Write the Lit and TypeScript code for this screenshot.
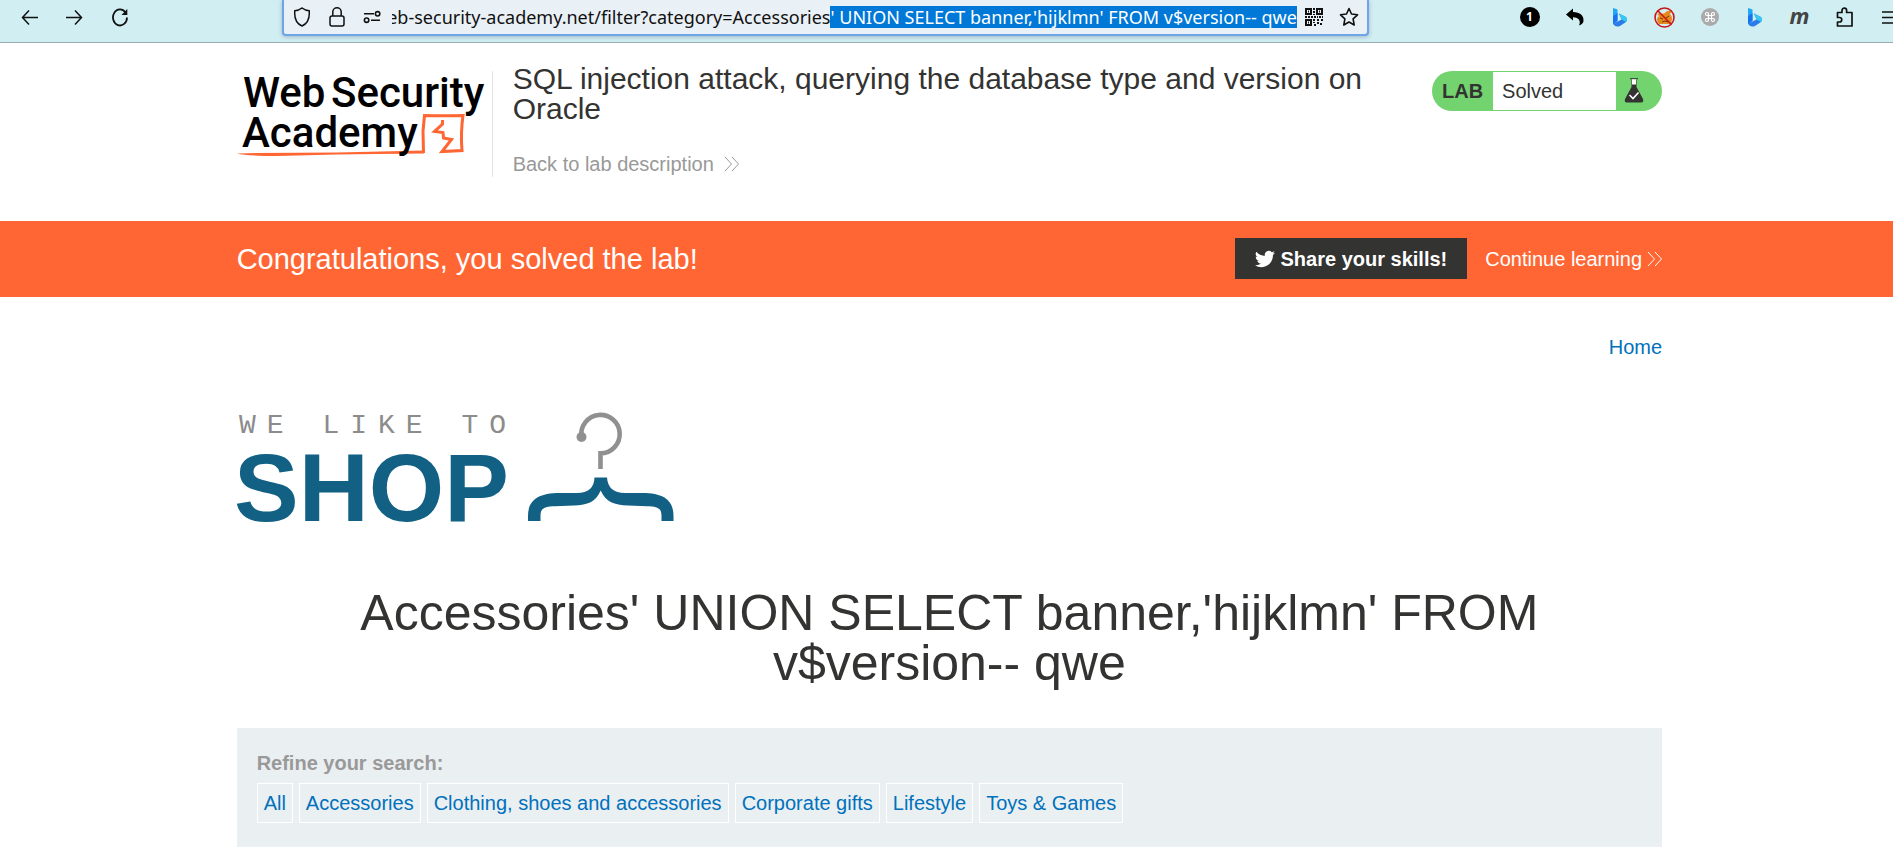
import { LitElement, html, css, svg } from "lit";
import { customElement, query } from "lit/decorators.js";

const bing = svg`
  <g stroke="none">
    <path d="M1 0L5.500 1.600V12.500L1 16Z" fill="#22a7f6"/>
    <path d="M1 8L5.500 5V13L1 16Z" fill="#1a73ee"/>
    <path d="M7 5.500L13.500 8.800Q16.500 11 14 14L8 18Q3 19.800 1 15.500L5.500 13.400L9.600 11.600Z" fill="#2b7ce9"/>
    <path d="M7 5.500L13.500 8.800Q16.500 11 14 14L9.600 11.600Z" fill="#35c8f0"/>
  </g>`;

const chevrons = html`
  <svg width="15" height="16" viewBox="0 0 15 16" fill="none" stroke="currentColor" aria-hidden="true">
    <path d="M1 1 L7.500 8 L1 15 M8 1 L14.500 8 L8 15"/>
  </svg>`;

@customElement("browser-bar")
export class BrowserBar extends LitElement {
  @query(".url") private urlBox!: HTMLInputElement;

  static styles = css`
    :host {
      display: grid;
      grid-template-columns: minmax(142px, 14.9%) minmax(300px, 1fr) minmax(390px, 27.7%);
      align-items: start;
      height: 42px;
      background: #d1eef2;
      border-bottom: 1px solid #9aabb3;
      overflow: hidden;
      color: #111;
    }
    button {
      display: grid;
      place-items: center;
      padding: 0;
      border: 0;
      background: none;
      color: inherit;
      width: 45px;
      height: 34px;
      flex: none;
    }
    svg { display: block; fill: none; stroke: currentColor; }
    .nav { display: flex; padding-left: 7px; }
    .address {
      height: 36px;
      display: flex;
      align-items: center;
      border: 2px solid #6fa3ea;
      border-top: 0;
      border-radius: 0 0 4px 4px;
      background: #e9f0f6;
      box-shadow: 0 1px 4px rgba(60, 90, 110, 0.35);
      box-sizing: border-box;
    }
    .address button { width: 35px; }
    .url {
      flex: 1;
      min-width: 0;
      margin: 0 0 0 3px;
      padding: 0;
      border: 0;
      outline: 0;
      background: none;
      height: 22px;
      font: 18px/22px "Noto Sans", "Open Sans", sans-serif;
      color: #111;
      caret-color: transparent;
    }
    .url::selection { background: #0078d7; color: #fff; }
    .extensions { display: flex; justify-content: flex-end; }
    .extensions .last { width: 24px; justify-items: end; overflow: hidden; margin-left: 2px; }
    .m { font: italic bold 22px/22px "Open Sans", sans-serif; color: #444; padding-bottom: 4px; }
    .count { font: bold 12px/20px "Open Sans", sans-serif; width: 20px; height: 20px; border-radius: 10px; background: #000; color: #fff; }
  `;

  firstUpdated() {
    const box = this.urlBox;
    box.focus({ preventScroll: true });
    box.setSelectionRange(box.value.indexOf("'"), box.value.length);
    box.scrollLeft = box.scrollWidth;
  }

  render() {
    return html`
      <nav class="nav" aria-label="Browser">
        <button aria-label="Back"><svg width="17" height="17" viewBox="0 0 17 17" stroke-width="1.500"><path d="M17 8.500H1.500M8 1.500L1.500 8.500L8 15.500"/></svg></button>
        <button aria-label="Forward"><svg width="17" height="17" viewBox="0 0 17 17" stroke-width="1.500"><path d="M0 8.500H15.500M9 1.500L15.500 8.500L9 15.500"/></svg></button>
        <button aria-label="Reload"><svg width="18" height="19" viewBox="0 0 18 19" stroke-width="1.800"><path d="M14.500 4.500A7 8 0 1 0 16 9.500"/><path d="M10.500 7H16.300V1Z" fill="currentColor" stroke="none"/></svg></button>
      </nav>
      <div class="address">
        <button aria-label="Protection"><svg width="18" height="20" viewBox="0 0 18 20" stroke-width="1.500"><path d="M9 1C6.800 2.700 4.300 3.600 1.800 3.800C1.200 10.800 3.500 16.700 9 19C14.500 16.700 16.800 10.800 16.200 3.800C13.700 3.600 11.200 2.700 9 1Z"/></svg></button>
        <button aria-label="Connection"><svg width="16" height="20" viewBox="0 0 16 20" stroke-width="1.500"><rect x="1" y="9" width="14" height="10" rx="2"/><path d="M3.800 9V5A4.200 4.200 0 0 1 12.200 5V9"/></svg></button>
        <button aria-label="Permissions"><svg width="18" height="14" viewBox="0 0 18 14" stroke-width="1.600"><path d="M1 3.800H11M8 10.200H17"/><circle cx="14.600" cy="3.800" r="2.200"/><circle cx="3.600" cy="10.200" r="2.200"/></svg></button>
        <input class="url" type="text" aria-label="Address" spellcheck="false" readonly
          .value=${"web-security-academy.net/filter?category=Accessories' UNION SELECT banner,'hijklmn' FROM v$version-- qwe"} />
        <button aria-label="QR code"><svg width="18" height="18" viewBox="0 0 18 18" stroke-width="2"><path d="M1 1H6V6H1ZM12 1H17V6H12ZM1 12H6V17H1Z"/><path d="M9 0V7M8 9H0M9 9H13M14 9H18M9 11V15M12 12H14M16 12H18M12 15H15M9 17H12M16 15V18" stroke-dasharray="2 1"/><path d="M3 3.500H4M14 3.500H15M3 14.500H4"/></svg></button>
        <button aria-label="Bookmark"><svg width="20" height="20" viewBox="0 0 20 20" stroke-width="1.600" stroke-linejoin="round"><path d="M10 1.500L12.500 7L18.500 7.800L14.100 11.900L15.200 18L10 15L4.800 18L5.900 11.900L1.500 7.800L7.500 7Z"/></svg></button>
      </div>
      <div class="extensions">
        <button aria-label="One notification"><span class="count">1</span></button>
        <button aria-label="Undo"><svg width="18" height="18" viewBox="0 0 18 18"><path d="M0 6.500L7 0.500V4C14 4 18 7.500 17.500 13Q17 16 13 17.500C15 13 13 9.500 7 9.200V12.500Z" fill="#000" stroke="none"/></svg></button>
        <button aria-label="Bing"><svg width="15" height="19" viewBox="0 0 15 19">${bing}</svg></button>
        <button aria-label="Blocked"><svg width="21" height="21" viewBox="0 0 21 21"><path d="M3 7L6 6Q10 8 13 4L18 4L16 7Q20 12 16 17H5Q1 12 5 9Z" fill="#e8891c" stroke="none"/><path d="M6 11L9 12M12 11L15 9M8 15Q11 13 14 15" stroke="#6b3a12"/><circle cx="10.500" cy="10.500" r="9.500" stroke="#c8161d" stroke-width="1.600"/><path d="M3.800 3.800L17.200 17.200" stroke="#c8161d" stroke-width="1.600"/></svg></button>
        <button aria-label="Shortcuts"><svg width="18" height="18" viewBox="0 0 18 18"><circle cx="9" cy="9" r="9" fill="#aaa" stroke="none"/><path d="M7.500 7.500H10.500V10.500H7.500ZM7.500 7.500H6A1.500 1.500 0 1 1 7.500 6ZM10.500 7.500V6A1.500 1.500 0 1 1 12 7.500ZM10.500 10.500H12A1.500 1.500 0 1 1 10.500 12ZM7.500 10.500V12A1.500 1.500 0 1 1 6 10.500Z" stroke="#fff" stroke-width="1.200"/></svg></button>
        <button aria-label="Bing chat"><svg width="15" height="19" viewBox="0 0 15 19">${bing}</svg></button>
        <button aria-label="Extension m"><span class="m">m</span></button>
        <button aria-label="Extensions"><svg width="18" height="20" viewBox="0 0 18 20" stroke-width="1.700" stroke-linejoin="round"><path d="M1.500 9V5.500H6V3.500A2.300 2.300 0 0 1 10.600 3.500V5.500H16V19H1.500V15H3.500A2.200 2.200 0 0 0 3.500 10.500H1.500Z"/></svg></button>
        <button class="last" aria-label="Menu"><svg width="11" height="13" viewBox="0 0 11 13" stroke-width="1.500"><path d="M0 1H11M0 6.500H11M0 12H11"/></svg></button>
      </div>
    `;
  }
}

@customElement("academy-logo")
export class AcademyLogo extends LitElement {
  static styles = css`
    :host { display: block; }
    svg { display: block; overflow: visible; }
    .name { font-family: Roboto, "Liberation Sans", sans-serif; font-weight: 500; fill: #000; font-size: 42px; }
    .mark { fill: none; stroke: #ff6633; stroke-width: 3; }
    .underline { fill: #ff6633; }
  `;
  render() {
    return html`
      <svg width="255" height="106" viewBox="0 0 255 106" role="img" aria-label="Web Security Academy">
        <path class="underline" d="M0 82.500L20 82L100 81.500L187 79.500V82.500L140 83L100 83.500L40 85Q10 85 0 82.500Z"/>
        <path class="mark" d="M186.500 82L186 60L187.500 44.500Q205 45 226 44.500Q223.500 62 225 79.500L205 80.500L214.500 68.500L206.500 67L206 61.500L197.500 60.500L205.500 53V49"/>
        <text class="name" x="6" y="36">Web</text>
        <text class="name" x="94" y="36">Security</text>
        <text class="name" x="5" y="76">Academy</text>
      </svg>`;
  }
}

@customElement("shop-logo")
export class ShopLogo extends LitElement {
  static styles = css`
    :host { display: block; }
    svg { display: block; overflow: visible; }
    .tagline { font: 28px "Liberation Mono", monospace; letter-spacing: 11px; fill: #8c8c8c; }
    .word { font: bold 97px "Liberation Sans", Arial, sans-serif; fill: #126083; }
  `;
  render() {
    return html`
      <svg width="440" height="112" viewBox="0 0 440 112" role="img" aria-label="We like to shop">
        <text class="tagline" x="2" y="20">WE LIKE TO</text>
        <text class="word" x="-3" y="108">SHOP</text>
        <circle cx="344.500" cy="24" r="5" fill="#909090"/>
        <path d="M344.500 24A19.200 19.200 0 1 1 363.500 40.300V56" fill="none" stroke="#909090" stroke-width="4.600"/>
        <path fill="#126083" d="M357.500 64.500H370Q371 80 388 80H405C428 80 436.500 88 436.500 103V108H424.500V103C424.500 96 422 93.500 410 93.200L391 92.500C377 92 369 89 363.700 77.500C358.500 89 351 92 337 92.500L318 93.200C306 93.500 303.500 96 303.500 103V108H291V103C291 88 300 80 323 80H340Q357 80 357.500 64.500Z"/>
      </svg>`;
  }
}

@customElement("app-root")
export class AppRoot extends LitElement {
  private categories = ["All", "Accessories", "Clothing, shoes and accessories", "Corporate gifts", "Lifestyle", "Toys & Games"];

  static styles = css`
    :host {
      display: block;
      min-height: 100vh;
      background: #fff;
      color: #333332;
      font: 20px/24px "Liberation Sans", Arial, sans-serif;
    }
    a { text-decoration: none; color: #0071bc; }
    h1, h2, p { margin: 0; font-weight: 400; }
    .container { padding: 0 12.2% 0 12.5%; }
    .lab { display: flex; align-items: flex-start; padding-top: 28px; padding-bottom: 44px; }
    .intro { flex: 1; border-left: 1px solid #e4e4e4; padding-left: 20px; height: 106px; }
    .intro h2 { font-size: 30px; line-height: 30px; margin-top: -7px; }
    .back { display: inline-flex; align-items: center; gap: 10px; color: #999; margin-top: 28px; }
    .status {
      display: flex;
      box-sizing: border-box;
      width: 230px;
      height: 40px;
      margin-left: 40px;
      border-radius: 20px;
      background: #72d36f;
      line-height: 40px;
      overflow: hidden;
    }
    .status strong { width: 61px; box-sizing: border-box; padding-left: 10px; }
    .status span { width: 123px; box-sizing: border-box; padding-left: 9px; margin: 1px 0; line-height: 38px; background: #fff; }
    .status svg { margin: 7px 0 0 8px; }
    .banner { background: #ff6633; color: #fff; }
    .banner .container { display: flex; align-items: center; min-height: 76px; }
    .banner h2 { flex: 1; font-size: 29px; line-height: 32px; }
    .share {
      display: flex;
      align-items: center;
      gap: 6px;
      height: 41px;
      padding: 0 20px;
      margin: 0 18px 1px 0;
      border: 0;
      background: #333332;
      color: #fff;
      font: bold 20px/24px "Liberation Sans", Arial, sans-serif;
    }
    .continue { display: flex; align-items: center; gap: 5px; color: #fff; }
    .top { display: flex; justify-content: flex-end; padding-top: 38px; }
    .logo { margin-top: 54px; }
    .title { font-size: 50px; line-height: 50px; text-align: center; padding-top: 63px; }
    .term { white-space: nowrap; }
    .filters { background: #eaeff2; margin-top: 40px; padding: 23px 20px 24px; }
    .filters p { font-weight: 700; color: #999; }
    .chips { display: flex; flex-wrap: wrap; gap: 6px; margin-top: 8px; }
    .chips a { border: 1px solid #fff; padding: 7px 6px; }
  `;

  render() {
    return html`
      <browser-bar></browser-bar>
      <header class="container lab">
        <academy-logo></academy-logo>
        <div class="intro">
          <h2>SQL injection attack, querying the database type and version on Oracle</h2>
          <a class="back" href="#lab">Back to lab description ${chevrons}</a>
        </div>
        <div class="status">
          <strong>LAB</strong><span>Solved</span>
          <svg width="20" height="25" viewBox="0 0 20 25" aria-hidden="true">
            <path d="M7.500 1.500V9L1 21Q0 24.500 3 24.500H17Q20 24.500 19 21L12.500 9V1.500Z" fill="#333332"/>
            <path d="M8 1H12V6.500H8Z" fill="#fff"/><path d="M6 0.700H14" stroke="#333332"/>
            <path d="M5.500 17L9 20.500L14.500 14.500" fill="none" stroke="#fff" stroke-width="1.600"/>
          </svg>
        </div>
      </header>
      <section class="banner">
        <div class="container">
          <h2>Congratulations, you solved the lab!</h2>
          <button class="share">
            <svg width="20" height="20" viewBox="0 0 24 24" fill="#fff" aria-hidden="true"><path d="M23.950 4.570a10 10 0 0 1-2.820.770 4.960 4.960 0 0 0 2.160-2.720c-.950.550-2 .960-3.130 1.180a4.920 4.920 0 0 0-8.380 4.480A13.930 13.930 0 0 1 1.640 3.160a4.920 4.920 0 0 0 1.520 6.570 4.900 4.900 0 0 1-2.230-.610v.060a4.920 4.920 0 0 0 3.950 4.830 5 5 0 0 1-2.210.080 4.940 4.940 0 0 0 4.600 3.420A9.870 9.870 0 0 1 0 19.540a13.990 13.990 0 0 0 7.550 2.210c9.050 0 14-7.500 14-13.980 0-.210 0-.420-.020-.630a9.940 9.940 0 0 0 2.460-2.550z"/></svg>
            Share your skills!
          </button>
          <a class="continue" href="#learn">Continue learning ${chevrons}</a>
        </div>
      </section>
      <main class="container">
        <nav class="top"><a href="#home">Home</a></nav>
        <shop-logo class="logo"></shop-logo>
        <h1 class="title">Accessories' UNION SELECT banner,'hijklmn' FROM <span class="term">v$version--</span> qwe</h1>
        <section class="filters">
          <p>Refine your search:</p>
          <nav class="chips" aria-label="Categories">
            ${this.categories.map((c) => html`<a href="#category">${c}</a>`)}
          </nav>
        </section>
      </main>
    `;
  }
}
